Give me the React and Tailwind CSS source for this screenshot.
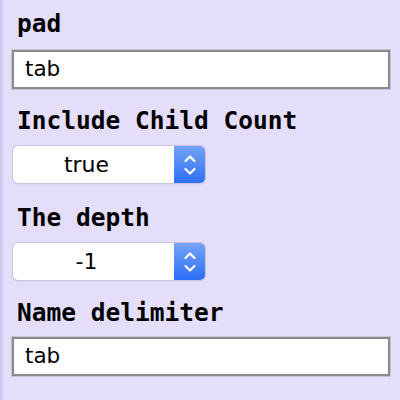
import React from 'react';

const Label = ({ children }) => (
  <div className="h-[28px] leading-[28px] text-[24.5px] font-bold text-black pl-[17px] font-['DejaVu_Sans_Mono',monospace]">
    {children}
  </div>
);

const TextInput = ({ value }) => (
  <div className="ml-[12px] w-[378px] h-[39px] bg-white border-2 border-[#8a8a8a] shadow-[0_0_0_1px_#c8c4d6] flex items-center pl-[11px]">
    <span className="text-[21.5px] text-black font-['DejaVu_Sans',sans-serif]">{value}</span>
  </div>
);

const Select = ({ value }) => (
  <div className="ml-[13px] w-[192px] h-[37px] bg-white rounded-[5px] shadow-[0_0_0_1px_#c9c3de,0_1px_2px_rgba(0,0,0,0.15)] flex overflow-hidden">
    <div className="flex-1 flex items-center justify-center pr-[14px] text-[22px] text-black font-['DejaVu_Sans',sans-serif]">
      {value}
    </div>
    <div className="w-[31px] h-full bg-[linear-gradient(to_bottom,#74a3f6,#2c6ef6)] flex items-center justify-center">
      <svg width="14" height="24" viewBox="0 0 14 24" fill="none" stroke="white" strokeWidth="2.2" strokeLinecap="round" strokeLinejoin="round">
        <path d="M2.5 8 L7 3.5 L11.5 8" />
        <path d="M2.5 16 L7 20.5 L11.5 16" />
      </svg>
    </div>
  </div>
);

export default function App() {
  return (
    <div className="w-[400px] h-[400px] overflow-hidden bg-[linear-gradient(to_right,#cdc4ec,#e4defb_5px)]">
      <div className="pt-[10px]">
        <Label>pad</Label>
        <div className="mt-[12px]">
          <TextInput value="tab" />
        </div>
        <div className="mt-[18px]">
          <Label>Include Child Count</Label>
        </div>
        <div className="mt-[11px]">
          <Select value="true" />
        </div>
        <div className="mt-[21px]">
          <Label>The depth</Label>
        </div>
        <div className="mt-[11px]">
          <Select value="-1" />
        </div>
        <div className="mt-[19px]">
          <Label>Name delimiter</Label>
        </div>
        <div className="mt-[10px]">
          <TextInput value="tab" />
        </div>
      </div>
    </div>
  );
}
